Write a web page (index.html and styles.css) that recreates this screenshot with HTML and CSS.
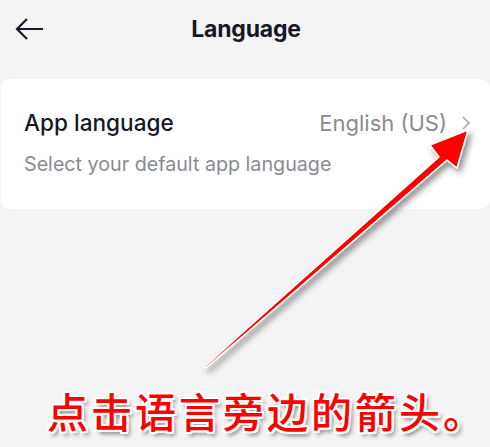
FILE: index.html
```html
<!DOCTYPE html>
<html>

<head>
    <title>Language</title>
    <link rel="stylesheet" href="styles.css">
</head>

<body>
    <div class="page">
        <div class="navBar">
            <div class="backButton">
                <svg width="30" height="24" viewBox="0 0 30 24">
                    <path d="M13 2 L3 12 L13 22 M3 12 L29 12" fill="none" stroke="#161823" stroke-width="2.2" />
                </svg>
            </div>
            <div class="navTitle">Language</div>
        </div>

        <div class="card">
            <div class="row">
                <div class="rowTitle">App language</div>
                <div class="rowValue">
                    English (US)
                    <svg class="chevron" width="10" height="16" viewBox="0 0 10 16">
                        <path d="M2 2 L8 8 L2 14" fill="none" stroke="#a8a8ac" stroke-width="1.6" />
                    </svg>
                </div>
            </div>
            <div class="rowDesc">Select your default app language</div>
        </div>

        <!-- 注釈の矢印 -->
        <svg class="hintArrow" width="490" height="447" viewBox="0 0 490 447">
            <defs>
                <filter id="shadow" x="-20%" y="-20%" width="140%" height="140%">
                    <feDropShadow dx="3" dy="4" stdDeviation="3" flood-color="#000" flood-opacity="0.45" />
                </filter>
                <linearGradient id="tail" x1="204" y1="366" x2="440" y2="150" gradientUnits="userSpaceOnUse">
                    <stop offset="0" stop-color="#ffb0b0" />
                    <stop offset="0.15" stop-color="#ff0000" />
                    <stop offset="1" stop-color="#ff0000" />
                </linearGradient>
            </defs>
            <path d="M204 367 L439 157 L430 145 L468 130 L457 168 L447 160 L206 368 Z"
                fill="url(#tail)" stroke="#fff" stroke-width="1.5" stroke-linejoin="round" filter="url(#shadow)" />
        </svg>

        <div class="hintText">点击语言旁边的箭头。</div>
    </div>
</body>

</html>
```

FILE: styles.css
```css
/* ページ全体 */
body {
    margin: 0;
    background-color: #f4f4f4;
    font-family: "Inter", "Liberation Sans", sans-serif;
    color: #161823;
}

.page {
    position: relative;
    width: 490px;
    height: 447px;
    overflow: hidden;
}

.navBar {
    position: relative;
    height: 58px;
    display: flex;
    align-items: center;
    justify-content: center;
}

.backButton {
    position: absolute;
    left: 14px;
    top: 17px;
    height: 24px;
}

.navTitle {
    font-size: 23px;
    font-weight: 700;
    letter-spacing: -0.2px;
    margin-left: 2px;
}

.card {
    margin: 21px 0 0 1px;
    height: 130px;
    background-color: #ffffff;
    border-radius: 9px;
    padding: 0 19px 0 23px;
    box-sizing: border-box;
}

.row {
    display: flex;
    justify-content: space-between;
    align-items: center;
    padding-top: 30px;
}

.rowTitle {
    font-size: 22.6px;
    font-weight: 500;
}

.rowValue {
    display: flex;
    align-items: center;
    font-size: 22px;
    color: #8a8b91;
}

.chevron {
    margin-left: 14px;
}

.rowDesc {
    margin-top: 16px;
    font-size: 19.7px;
    color: #8a8b91;
}

.hintArrow {
    position: absolute;
    left: 0;
    top: 0;
}

.hintText {
    position: absolute;
    left: 47px;
    top: 383px;
    white-space: nowrap;
    font-family: "Noto Sans CJK SC", sans-serif;
    font-size: 41px;
    line-height: 54px;
    font-weight: 500;
    color: #ff0000;
    letter-spacing: 3px;
    text-shadow:
        -2px 0 #fff, 2px 0 #fff, 0 -2px #fff, 0 2px #fff,
        -2px -2px #fff, 2px 2px #fff, -2px 2px #fff, 2px -2px #fff,
        3px 4px 4px rgba(0, 0, 0, 0.5);
}
```
